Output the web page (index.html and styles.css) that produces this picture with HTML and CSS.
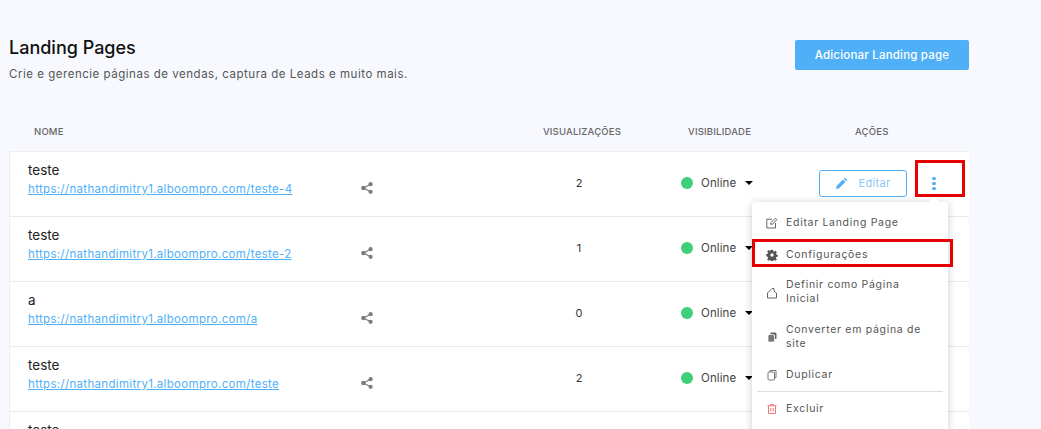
FILE: index.html
```html
<!DOCTYPE html>
<html lang="pt">
<head>
<meta charset="utf-8">
<title>Landing Pages</title>
<link rel="stylesheet" href="styles.css">
</head>
<body>
<main class="page">
  <header class="top">
    <div>
      <h1 class="title">Landing Pages</h1>
      <p class="subtitle">Crie e gerencie páginas de vendas, captura de Leads e muito mais.</p>
    </div>
    <button class="add-btn">Adicionar Landing page</button>
  </header>

  <div class="grid head">
    <span class="h-name">NOME</span>
    <span></span>
    <span class="cell-center h-views">VISUALIZAÇÕES</span>
    <span class="h-vis">VISIBILIDADE</span>
    <span class="h-act">AÇÕES</span>
  </div>

  <section class="card">
    <div class="grid row">
      <div class="info"><div class="name">teste</div><a class="link" href="#">https://nathandimitry1.alboompro.com/teste-4</a></div>
      <svg class="share" viewBox="0 0 12 12"><use href="#i-share"/></svg>
      <span class="cell-center views">2</span>
      <span class="status"><i class="dot"></i>Online<i class="caret"></i></span>
      <span class="actions"><button class="edit"><svg class="pencil" viewBox="0 0 12 12"><use href="#i-pencil"/></svg>Editar</button><span class="kebab"><i></i><i></i><i></i></span></span>
    </div>
    <div class="grid row">
      <div class="info"><div class="name">teste</div><a class="link" href="#">https://nathandimitry1.alboompro.com/teste-2</a></div>
      <svg class="share" viewBox="0 0 12 12"><use href="#i-share"/></svg>
      <span class="cell-center views">1</span>
      <span class="status"><i class="dot"></i>Online<i class="caret"></i></span>
      <span></span>
    </div>
    <div class="grid row">
      <div class="info"><div class="name">a</div><a class="link" href="#">https://nathandimitry1.alboompro.com/a</a></div>
      <svg class="share" viewBox="0 0 12 12"><use href="#i-share"/></svg>
      <span class="cell-center views">0</span>
      <span class="status"><i class="dot"></i>Online<i class="caret"></i></span>
      <span></span>
    </div>
    <div class="grid row">
      <div class="info"><div class="name">teste</div><a class="link" href="#">https://nathandimitry1.alboompro.com/teste</a></div>
      <svg class="share" viewBox="0 0 12 12"><use href="#i-share"/></svg>
      <span class="cell-center views">2</span>
      <span class="status"><i class="dot"></i>Online<i class="caret"></i></span>
      <span></span>
    </div>
    <div class="grid row">
      <div class="info"><div class="name">teste</div></div>
    </div>

    <nav class="menu">
      <a class="item"><svg class="ico" viewBox="0 0 12 12"><path d="M9.5 6V11H.8V2.2H6M4.8 7.4 5 5.6 9.4 1.2 10.9 2.6 6.5 7.2Z" fill="none" stroke="#666" stroke-width="1"/></svg>Editar Landing Page</a>
      <a class="item"><svg class="ico" viewBox="0 0 12 12"><path d="M5 .7h2l.3 1.5 1 .4 1.3-.8 1.3 1.5-1 1.2.4 1 1.4.3v2l-1.4.3-.4 1 1 1.2-1.3 1.5-1.3-.7-1 .4-.3 1.4H5l-.3-1.4-1-.4-1.3.7-1.3-1.5 1-1.2-.4-1L.3 7V5l1.4-.3.4-1-1-1.2L2.4 1l1.3.7 1-.4ZM6 4.3a1.7 1.7 0 1 0 0 3.4 1.7 1.7 0 0 0 0-3.4Z" fill="#555" fill-rule="evenodd"/></svg>Configurações</a>
      <a class="item double tight"><svg class="ico" viewBox="0 0 12 12"><path d="M1.5 11V6L6 1.5H8V4L10.5 6V11Z" fill="none" stroke="#666"/></svg>Definir como Página Inicial</a>
      <a class="item double"><svg class="ico" viewBox="0 0 12 12"><path d="M4.5 1.5H9.5L10.5 2.5V8H9V4H4.5Z" fill="#666"/><rect x="2" y="3.5" width="6.5" height="7.5" rx="1.5" fill="#777" stroke="#fff" stroke-width=".7"/></svg>Converter em página de site</a>
      <a class="item"><svg class="ico" viewBox="0 0 12 12"><path d="M4 3V1.5H10V8.5H8.5" fill="none" stroke="#777"/><rect x="2" y="3" width="6.5" height="8" rx="1" fill="none" stroke="#777"/></svg>Duplicar</a>
      <hr class="sep">
      <a class="item"><svg class="ico" viewBox="0 0 12 12"><path d="M1.5 2.8H10.5M4.5 2.5V1.5H7.5V2.5M2.5 3V10.5H9.5V3M4.8 5V8.5M7.2 5V8.5" fill="none" stroke="#f2777c"/></svg>Excluir</a>
    </nav>
  </section>

  <span class="mark mark-kebab"></span>
  <span class="mark mark-config"></span>
</main>

<svg class="defs" width="0" height="0">
  <symbol id="i-share" viewBox="0 0 12 12"><circle cx="9.6" cy="2.2" r="2.1" fill="#7d7d7d"/><circle cx="9.6" cy="9.8" r="2.1" fill="#7d7d7d"/><circle cx="2.4" cy="6" r="2.3" fill="#7d7d7d"/><path d="M2.4 6 9.6 2.2M2.4 6 9.6 9.8" stroke="#7d7d7d" stroke-width="1.3"/></symbol>
  <symbol id="i-pencil" viewBox="0 0 12 12"><path d="M0 12 .7 8.6 7.6 1.7 10.3 4.4 3.4 11.3ZM8.4.9 9 .3C9.4-.1 10-.1 10.4.3L11.7 1.6C12.1 2 12.1 2.6 11.7 3L11.1 3.6Z" fill="#4fb0f8"/></symbol>
</svg>
</body>
</html>
```

FILE: styles.css
```css
* { box-sizing: border-box; }
html, body { margin: 0; height: 429px; overflow: hidden; }
body {
  background: #f7f9fe;
  font-family: "Inter", "Open Sans", sans-serif;
  color: #222;
}
.page { position: relative; width: 1041px; padding: 40px 0 0 9px; }
.top {
  display: flex;
  justify-content: space-between;
  align-items: flex-start;
  width: 960px;
  height: 76px;
}
.title {
  margin: -1px 0 0;
  font-size: 18px;
  line-height: 18px;
  font-weight: 500;
  color: #111;
}
.subtitle {
  margin: 10px 0 0;
  font-size: 11.5px;
  line-height: 14px;
  letter-spacing: .52px;
  color: #555;
}
.add-btn {
  width: 174px;
  height: 30px;
  border: 0;
  border-radius: 2px;
  background: #4fb0f8;
  color: #fff;
  font: 500 11.5px "Inter", sans-serif;
  letter-spacing: .2px;
}
.grid {
  display: grid;
  width: 960px;
  grid-template-columns: 352px 20px 300px 138px 1fr;
  align-items: center;
}
.head {
  height: 35px;
  padding-bottom: 4px;
  font-size: 9.5px;
  font-weight: 500;
  color: #666;
  letter-spacing: .2px;
}
.h-name { padding-left: 25px; }
.cell-center { padding-left: 96px; text-align: center; }
.h-views { padding-left: 102px; }
.h-vis { padding-left: 7px; }
.h-act { padding-left: 36px; }
.card {
  position: relative;
  width: 960px;
  height: 300px;
  padding-top: 1px;
  background: #fff;
  box-shadow: inset 1px 1px 0 #eee;
}
.row {
  height: 65px;
  padding-bottom: 2px;
  border-bottom: 1px solid #eaeaea;
}
.info { padding: 10px 0 0 19px; align-self: start; }
.name { font-size: 13.5px; line-height: 16px; color: #222; }
.link {
  display: block;
  font-size: 11.5px;
  line-height: 17px;
  margin-top: 3px;
  letter-spacing: .33px;
  color: #4fb0f8;
  text-decoration: underline;
  white-space: nowrap;
}
.share { width: 12px; height: 12px; margin-top: 10px; }
.views { font-size: 11px; color: #333; }
.status {
  display: flex;
  align-items: center;
  font-size: 11.5px;
  letter-spacing: .1px;
  color: #444;
}
.dot {
  width: 12px;
  height: 12px;
  border-radius: 50%;
  background: #3ecf7a;
  margin-right: 8px;
}
.caret {
  width: 0;
  height: 0;
  margin-left: 9px;
  border: 4px solid transparent;
  border-top: 4px solid #000;
  border-bottom: 0;
}
.actions { display: flex; align-items: center; }
.edit {
  display: flex;
  align-items: center;
  justify-content: center;
  width: 88px;
  height: 27px;
  border: 1px solid #4fb0f8;
  border-radius: 3px;
  background: #fff;
  color: #8cc8f7;
  font: 11px "Inter", sans-serif;
  letter-spacing: .3px;
}
.pencil { width: 11px; height: 11px; margin-right: 12px; }
.kebab {
  display: flex;
  flex-direction: column;
  gap: 1.5px;
  margin: 1px 0 0 25px;
}
.kebab i { width: 3.5px; height: 3.5px; border-radius: 50%; background: #4fb0f8; }
.menu {
  position: absolute;
  left: 743px;
  top: 51px;
  width: 196px;
  height: 260px;
  padding-top: 5px;
  background: #fff;
  border-radius: 3px;
  box-shadow: 0 1px 8px rgba(0, 0, 0, .2);
}
.menu::before {
  content: "";
  position: absolute;
  top: -4px;
  left: 178px;
  width: 8px;
  height: 8px;
  background: #fff;
  transform: rotate(45deg);
}
.item {
  display: flex;
  align-items: center;
  height: 32px;
  padding: 0 16px 0 14px;
  font-size: 10.5px;
  line-height: 14px;
  letter-spacing: .7px;
  color: #555;
}
.item.double { height: 44px; }
.item.tight { padding-bottom: 2px; }
.item.tight .ico { margin-top: 2px; }
.ico { flex: none; width: 12px; height: 12px; margin-right: 8px; }
.sep { height: 1px; margin: 0 5px 1px; border: 0; background: #ddd; }
.mark {
  position: absolute;
  border: 3px solid #e60000;
}
.mark-kebab { left: 915px; top: 160px; width: 50px; height: 37px; }
.mark-config { left: 752px; top: 239px; width: 201px; height: 28px; }
.defs { position: absolute; }
```
